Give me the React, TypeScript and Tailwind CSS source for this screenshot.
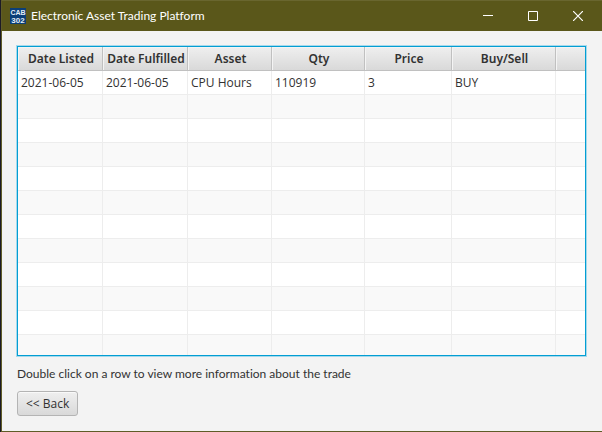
import React from "react";

type Trade = {
  listed: string;
  fulfilled: string;
  asset: string;
  qty: string;
  price: string;
  side: string;
};

const columns: { key: keyof Trade; label: string; width: string }[] = [
  { key: "listed", label: "Date Listed", width: "w-[85px]" },
  { key: "fulfilled", label: "Date Fulfilled", width: "w-[85px]" },
  { key: "asset", label: "Asset", width: "w-[84px]" },
  { key: "qty", label: "Qty", width: "w-[93px]" },
  { key: "price", label: "Price", width: "w-[87px]" },
  { key: "side", label: "Buy/Sell", width: "w-[104px]" },
];

const trades: Trade[] = [
  { listed: "2021-06-05", fulfilled: "2021-06-05", asset: "CPU Hours", qty: "110919", price: "3", side: "BUY" },
];

const ROW_COUNT = 12;

function TitleBar() {
  return (
    <header className="flex h-[31px] items-center border-t border-[#69662f] bg-[#5a571a] pr-px pl-2 text-white">
      <svg viewBox="0 0 16 16" className="size-4 shrink-0 bg-[#0b3f78]" aria-hidden="true">
        <text x="8" y="7" textAnchor="middle" fill="#e4edf5" fontSize="7" fontWeight="700" fontFamily="Liberation Sans, sans-serif">CAB</text>
        <text x="8" y="15" textAnchor="middle" fill="#e4edf5" fontSize="8" fontWeight="700" fontFamily="Liberation Sans, sans-serif">302</text>
      </svg>
      <h1 className="ml-[5px] flex-1 font-['Lato','Open_Sans',sans-serif] whitespace-nowrap [font-variant-ligatures:none]">
        Electronic Asset Trading Platform
      </h1>
      <button type="button" aria-label="Minimize" className="flex h-full w-[45px] items-center justify-center">
        <svg viewBox="0 0 10 10" className="size-2.5" stroke="currentColor" fill="none"><path d="M0 4.5H10" /></svg>
      </button>
      <button type="button" aria-label="Maximize" className="flex h-full w-[45px] items-center justify-center">
        <svg viewBox="0 0 10 10" className="size-2.5" stroke="currentColor" fill="none"><path d="M.5 .5H9.5V9.5H.5Z" /></svg>
      </button>
      <button type="button" aria-label="Close" className="flex h-full w-[46px] items-center justify-center">
        <svg viewBox="0 0 10 10" className="size-2.5" stroke="currentColor" strokeWidth="1.2" fill="none"><path d="M0 0L10 10M10 0L0 10" /></svg>
      </button>
    </header>
  );
}

function TradeTable() {
  return (
    <div className="overflow-hidden border border-[#039ed3] bg-white shadow-[0_0_0_1px_#a5d9ec]">
      <table className="w-full table-fixed border-separate border-spacing-0">
        <thead>
          <tr className="h-6">
            {columns.map((c) => (
              <th
                key={c.key}
                scope="col"
                className={`${c.width} border-r border-b border-[#c0c0c0] bg-linear-to-b from-[#efefef] to-[#d9d9d9] py-0 pr-0 pl-0.5 text-center font-['Noto_Sans','Open_Sans',sans-serif] font-semibold whitespace-nowrap shadow-[inset_1px_1px_0_#f4f4f4]`}
              >
                {c.label}
              </th>
            ))}
            <td className="border-b border-[#c0c0c0] bg-linear-to-b from-[#efefef] to-[#d9d9d9] p-0 shadow-[inset_1px_1px_0_#f4f4f4]" />
          </tr>
        </thead>
        <tbody>
          {Array.from({ length: ROW_COUNT }, (_, i) => (
            <tr key={i} className="h-6 even:bg-[#f9f9f9] last:h-5">
              {columns.map((c) => (
                <td key={c.key} className={`border-r border-[#ededed] py-0 pr-0 pl-[3px] whitespace-nowrap ${i < ROW_COUNT - 1 ? "border-b" : ""}`}>
                  {trades[i]?.[c.key]}
                </td>
              ))}
              <td className={`border-[#ededed] p-0 ${i < ROW_COUNT - 1 ? "border-b" : ""}`} />
            </tr>
          ))}
        </tbody>
      </table>
    </div>
  );
}

export default function App() {
  return (
    <div className="flex min-h-screen border-l border-[#1c1a26] font-['Open_Sans','Noto_Sans',sans-serif] text-[12px] leading-4 text-[#323232]">
      <div className="flex min-w-0 flex-1 flex-col border-b border-l border-[#5f5c27] bg-[#f3f3f3]">
        <TitleBar />
        <main className="flex flex-col items-start pt-[15px] pr-4 pl-[15px]">
          <div className="w-full">
            <TradeTable />
          </div>
          <p className="mt-2.5 font-['Lato','Open_Sans',sans-serif] [font-variant-ligatures:none]">
            Double click on a row to view more information about the trade
          </p>
          <button
            type="button"
            className="mt-[9px] h-[25px] rounded-[3px] border border-[#b4b4b4] bg-linear-to-b from-[#efefef] to-[#d9d9d9] px-2 shadow-[inset_0_1px_0_#f9f9f9]"
          >
            &lt;&lt; Back
          </button>
        </main>
      </div>
    </div>
  );
}
